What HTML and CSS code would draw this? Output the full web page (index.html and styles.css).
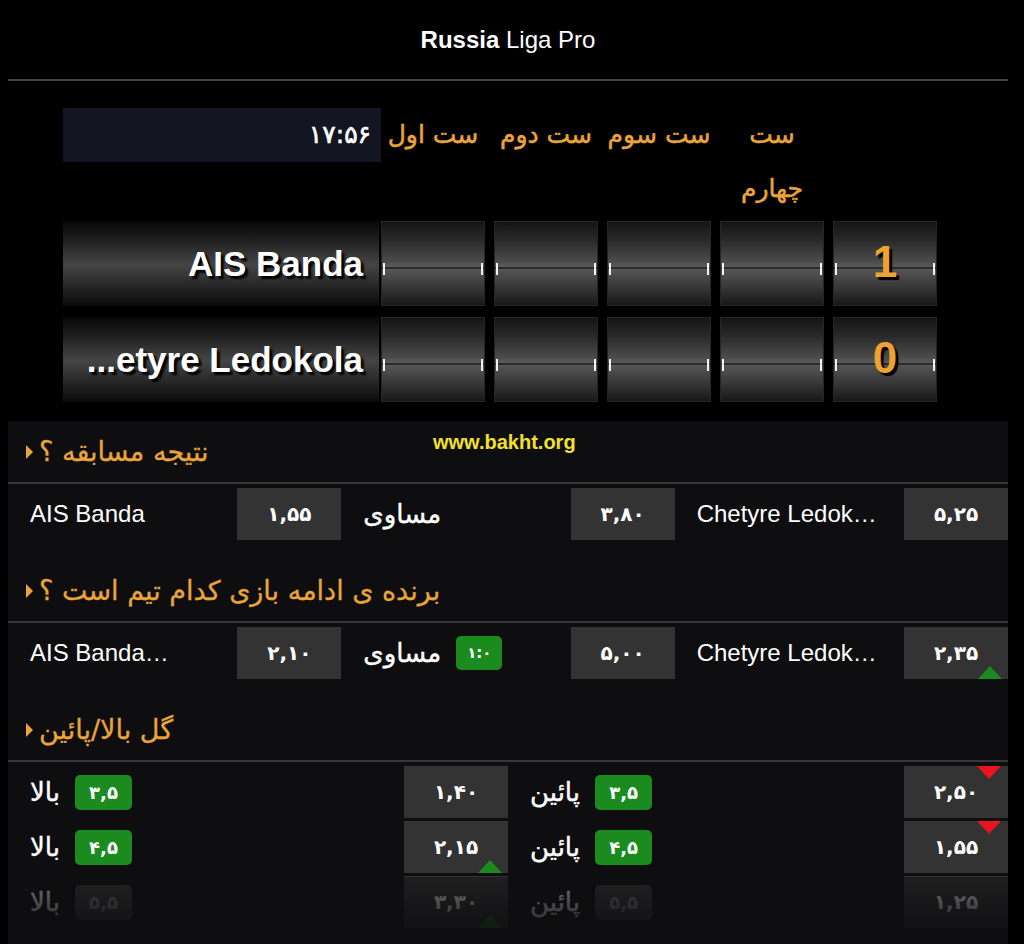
FILE: index.html
```html
<!DOCTYPE html>
<html lang="fa">
<head>
<meta charset="utf-8">
<title>Russia Liga Pro</title>
<link rel="stylesheet" href="styles.css">
</head>
<body>
<div class="page">
  <div class="title"><b>Russia</b> Liga Pro</div>
  <div class="rule"></div>

  <div class="board">
    <div class="board-head">
      <div class="timer">۱۷:۵۶</div>
      <div class="sets">
        <div class="set" dir="rtl">ست اول</div>
        <div class="set" dir="rtl">ست دوم</div>
        <div class="set" dir="rtl">ست سوم</div>
        <div class="set" dir="rtl">ست<br>چهارم</div>
        <div class="set"></div>
      </div>
    </div>
    <div class="team-row first">
      <div class="team">AIS Banda</div>
      <div class="cells">
        <div class="cell"></div>
        <div class="cell"></div>
        <div class="cell"></div>
        <div class="cell"></div>
        <div class="cell"><span class="score">1</span></div>
      </div>
    </div>
    <div class="team-row second">
      <div class="team">...etyre Ledokola</div>
      <div class="cells">
        <div class="cell"></div>
        <div class="cell"></div>
        <div class="cell"></div>
        <div class="cell"></div>
        <div class="cell"><span class="score">0</span></div>
      </div>
    </div>
  </div>

  <div class="panel">
    <div class="brand">www.bakht.org</div>

    <div class="mhead"><span class="tri"></span><span class="mtitle" dir="rtl">نتیجه مسابقه ؟</span></div>
    <div class="mrow">
      <div class="grp"><span class="lbl">AIS Banda</span><span class="odd">۱,۵۵</span></div>
      <div class="grp"><span class="lbl fa">مساوی</span><span class="odd">۳,۸۰</span></div>
      <div class="grp"><span class="lbl">Chetyre Ledok…</span><span class="odd">۵,۲۵</span></div>
    </div>

    <div class="mhead"><span class="tri"></span><span class="mtitle" dir="rtl">برنده ی ادامه بازی کدام تیم است ؟</span></div>
    <div class="mrow">
      <div class="grp"><span class="lbl">AIS Banda…</span><span class="odd">۲,۱۰</span></div>
      <div class="grp"><span class="lbl fa">مساوی</span><span class="badge small">۱:۰</span><span class="odd">۵,۰۰</span></div>
      <div class="grp"><span class="lbl">Chetyre Ledok…</span><span class="odd">۲,۳۵<i class="up"></i></span></div>
    </div>

    <div class="mhead"><span class="tri"></span><span class="mtitle" dir="rtl">گل بالا/پائین</span></div>
    <div class="ou">
      <div class="ourow">
        <div class="grp"><span class="lbl fa">بالا</span><span class="badge">۳,۵</span><span class="odd">۱,۴۰</span></div>
        <div class="grp"><span class="lbl fa">پائین</span><span class="badge">۳,۵</span><span class="odd">۲,۵۰<i class="down"></i></span></div>
      </div>
      <div class="ourow">
        <div class="grp"><span class="lbl fa">بالا</span><span class="badge">۴,۵</span><span class="odd">۲,۱۵<i class="up"></i></span></div>
        <div class="grp"><span class="lbl fa">پائین</span><span class="badge">۴,۵</span><span class="odd">۱,۵۵<i class="down"></i></span></div>
      </div>
      <div class="ourow">
        <div class="grp"><span class="lbl fa">بالا</span><span class="badge dim">۵,۵</span><span class="odd">۳,۳۰<i class="up"></i></span></div>
        <div class="grp"><span class="lbl fa">پائین</span><span class="badge dim">۵,۵</span><span class="odd">۱,۲۵</span></div>
      </div>
    </div>
  </div>
</div>
</body>
</html>
```
FILE: styles.css
```css
* { box-sizing: border-box; margin: 0; padding: 0; }

html, body {
  background: #000;
  width: 1024px;
  height: 944px;
  overflow: hidden;
}

body {
  font-family: "Liberation Sans", "DejaVu Sans", sans-serif;
  color: #fff;
}

.page {
  width: 1000px;
  margin-left: 8px;
}

.title {
  height: 79px;
  line-height: 80px;
  text-align: center;
  font-size: 24px;
  color: #fff;
}

.rule {
  height: 2px;
  background: #444;
}

/* ---------- score board ---------- */
.board {
  padding: 27px 0 0 55px;
}

.board-head {
  display: flex;
  align-items: flex-start;
  height: 108px;
}

.timer {
  width: 318px;
  height: 54px;
  background: #131522;
  color: #fff;
  font-family: "DejaVu Sans", sans-serif;
  font-size: 25px;
  line-height: 54px;
  text-align: right;
  padding-right: 10px;
  -webkit-text-stroke: 0.6px #fff;
}

.sets {
  display: flex;
  gap: 9px;
}

.set {
  width: 104px;
  text-align: center;
  line-height: 54px;
  font-family: "DejaVu Sans", sans-serif;
  font-size: 25px;
  color: #eaa43c;
  white-space: nowrap;
  -webkit-text-stroke: 0.5px #eaa43c;
}

.team-row {
  display: flex;
  height: 85px;
}

.team-row.first { margin-top: 5px; }
.team-row.second { margin-top: 11px; }

.team {
  width: 316px;
  margin-right: 2px;
  height: 85px;
  line-height: 85px;
  text-align: right;
  padding-right: 16px;
  font-size: 35px;
  font-weight: 700;
  color: #fff;
  text-shadow: 3px 3px 2px #000;
  white-space: nowrap;
  overflow: hidden;
  background: linear-gradient(to bottom, #070707 0%, #1e1e1e 22%, #3e3e3e 45%, #444 52%, #2c2c2c 72%, #0a0a0a 100%);
}

.cells {
  display: flex;
  gap: 9px;
}

.cell {
  position: relative;
  width: 104px;
  height: 85px;
  border: 1px solid #262626;
  background: linear-gradient(to bottom,
    #141414 0%, #2a2a2a 22%, #4c4c4c 48%, #5a5a5a 54%,
    #2a2a2a 54.6%, #2a2a2a 56%, #565656 56.6%,
    #3e3e3e 74%, #181818 100%);
  display: flex;
  justify-content: center;
  align-items: center;
}

.cell::before,
.cell::after {
  content: "";
  position: absolute;
  top: 41px;
  width: 2px;
  height: 12px;
  background: #f0f0f0;
}

.cell::before { left: 1px; }
.cell::after { right: 1px; }

.score {
  font-size: 44px;
  font-weight: 700;
  color: #eda234;
  text-shadow: 3px 3px 1px #000;
  margin-top: -4px;
}

/* ---------- markets panel ---------- */
.panel {
  position: relative;
  margin-top: 19px;
  height: 523px;
  background: #0e0e10;
  overflow: hidden;
}

.panel::after {
  content: "";
  position: absolute;
  left: 0;
  right: 0;
  bottom: 0;
  height: 67px;
  background: linear-gradient(to bottom, rgba(14,14,16,0.55) 0%, rgba(14,14,16,0.8) 50%, rgba(14,14,16,0.96) 100%);
}

.brand {
  position: absolute;
  top: 10px;
  left: 425px;
  font-size: 20px;
  font-weight: 700;
  color: #f2e12e;
}

.mhead {
  height: 63px;
  display: flex;
  align-items: center;
  gap: 6px;
  padding-left: 18px;
  border-bottom: 2px solid #363636;
}

.tri {
  width: 0;
  height: 0;
  border-left: 7px solid #eaa43c;
  border-top: 7px solid transparent;
  border-bottom: 7px solid transparent;
}

.mtitle {
  font-family: "DejaVu Sans", sans-serif;
  font-size: 27px;
  color: #eaa43c;
  -webkit-text-stroke: 0.3px #eaa43c;
}

.mrow {
  display: flex;
  padding: 4px 0 20px;
}

.grp {
  flex: 1;
  display: flex;
  align-items: center;
  padding-left: 22px;
  height: 52px;
}

.lbl {
  font-size: 24px;
  color: #fff;
  white-space: nowrap;
}

.lbl.fa {
  font-family: "DejaVu Sans", sans-serif;
  font-size: 26px;
  -webkit-text-stroke: 0.4px #fff;
}

.badge {
  margin-left: 15px;
  height: 35px;
  min-width: 57px;
  padding: 0 8px;
  border-radius: 5px;
  background: #1b8a1f;
  color: #fff;
  font-family: "DejaVu Sans", sans-serif;
  font-weight: 700;
  font-size: 18px;
  line-height: 35px;
  text-align: center;
}

.badge.small {
  min-width: 46px;
  height: 34px;
  line-height: 34px;
  font-size: 15px;
}

.badge.dim {
  background: #3a3a3a;
  color: #888;
}

.odd {
  position: relative;
  margin-left: auto;
  width: 104px;
  height: 52px;
  background: #333;
  color: #fff;
  font-family: "DejaVu Sans", sans-serif;
  font-weight: 700;
  font-size: 20px;
  line-height: 52px;
  text-align: center;
}

.up {
  position: absolute;
  right: 6px;
  bottom: 0;
  width: 0;
  height: 0;
  border-left: 12px solid transparent;
  border-right: 12px solid transparent;
  border-bottom: 13px solid #1b8a1f;
}

.down {
  position: absolute;
  right: 7px;
  top: 0;
  width: 0;
  height: 0;
  border-left: 12px solid transparent;
  border-right: 12px solid transparent;
  border-top: 13px solid #e8141e;
}

.ou {
  padding-top: 4px;
  display: flex;
  flex-direction: column;
  gap: 3px;
}

.ourow {
  display: flex;
}
```
